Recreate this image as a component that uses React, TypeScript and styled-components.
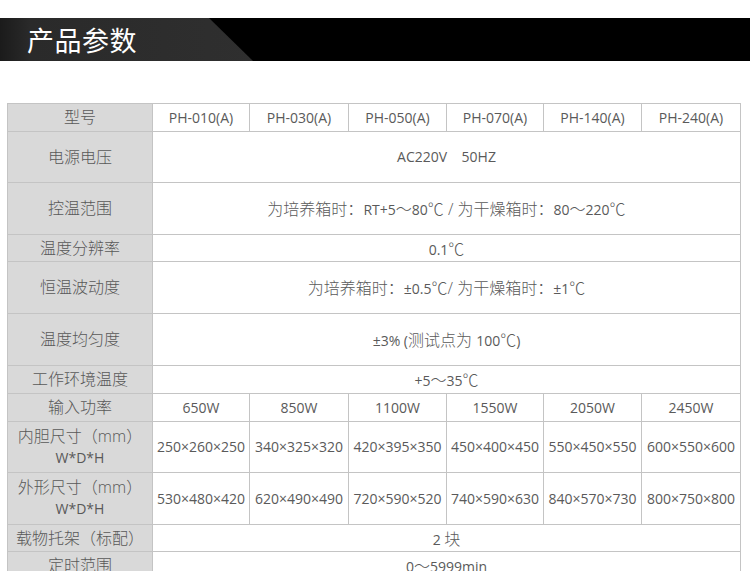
import React from "react";
import styled, { createGlobalStyle } from "styled-components";

const Global = createGlobalStyle`
  html, body { margin: 0; padding: 0; background: #fff; }
  body { font-family: "Open Sans", "Noto Sans CJK SC", sans-serif; }
`;

const Page = styled.div`
  width: 750px;
  padding-top: 18px;
`;

const TitleBar = styled.div`
  height: 43px;
  background: #000;
  display: flex;
`;

const TitlePanel = styled.div`
  width: 253px;
  height: 100%;
  background: linear-gradient(90deg, #1b1b1b 0%, #2a2a2a 12%, #2f2f2f 100%);
  clip-path: polygon(0 0, 209px 0, 253px 100%, 0 100%);
  display: flex;
  align-items: center;
  padding-left: 27px;
  box-sizing: border-box;
`;

const Title = styled.h1`
  margin: 0;
  color: #fff;
  font-family: "Noto Sans CJK SC", sans-serif;
  font-weight: 400;
  font-size: 27px;
  letter-spacing: 0.5px;
  line-height: 1;
`;

const Table = styled.table`
  margin: 42px 0 0 7px;
  width: 733px;
  border-collapse: collapse;
  table-layout: fixed;
`;

const Row = styled.tr<{ $h: number }>`
  height: ${(p) => p.$h}px;
`;

const Label = styled.td`
  background: #d9d9d9;
  border: 1px solid #c4c4c4;
  color: #585858;
  font-family: "Open Sans", "Noto Sans CJK SC", sans-serif;
  font-weight: 300;
  font-size: 16px;
  text-align: center;
  padding: 0 0 1px;
  line-height: 22px;
`;

const Sub = styled.span`
  display: block;
  font-size: 14px;
  font-weight: 400;
`;

const Cell = styled.td`
  background: #fff;
  border: 1px solid #c4c4c4;
  color: #5a5a5a;
  font-family: "Open Sans", "Noto Sans CJK SC", sans-serif;
  font-size: 14px;
  text-align: center;
  padding: 0 0 1px;
  white-space: pre;
`;

const Cjk = styled.span`
  font-size: 16px;
  font-weight: 300;
`;

const widths = [145, 97, 99, 98, 97, 98, 99];

type R = { label: React.ReactNode; h: number; values?: string[]; span?: React.ReactNode };

const rows: R[] = [
  { label: "型号", h: 28, values: ["PH-010(A)", "PH-030(A)", "PH-050(A)", "PH-070(A)", "PH-140(A)", "PH-240(A)"] },
  { label: "电源电压", h: 51, span: "AC220V    50HZ" },
  {
    label: "控温范围",
    h: 52,
    span: (
      <>
        <Cjk>为培养箱时：</Cjk>RT+5<Cjk>～</Cjk>80<Cjk>℃ / 为干燥箱时：</Cjk>80<Cjk>～</Cjk>220<Cjk>℃</Cjk>
      </>
    ),
  },
  { label: "温度分辨率", h: 27, span: <>0.1<Cjk>℃</Cjk></> },
  {
    label: "恒温波动度",
    h: 52,
    span: (
      <>
        <Cjk>为培养箱时：</Cjk>±0.5<Cjk>℃/ 为干燥箱时：</Cjk>±1<Cjk>℃</Cjk>
      </>
    ),
  },
  { label: "温度均匀度", h: 52, span: <>±3% (<Cjk>测试点为 </Cjk>100<Cjk>℃</Cjk>)</> },
  { label: "工作环境温度", h: 28, span: <>+5<Cjk>～</Cjk>35<Cjk>℃</Cjk></> },
  { label: "输入功率", h: 28, values: ["650W", "850W", "1100W", "1550W", "2050W", "2450W"] },
  {
    label: <>内胆尺寸（mm）<Sub>W*D*H</Sub></>,
    h: 51,
    values: ["250×260×250", "340×325×320", "420×395×350", "450×400×450", "550×450×550", "600×550×600"],
  },
  {
    label: <>外形尺寸（mm）<Sub>W*D*H</Sub></>,
    h: 52,
    values: ["530×480×420", "620×490×490", "720×590×520", "740×590×630", "840×570×730", "800×750×800"],
  },
  { label: "载物托架（标配）", h: 27, span: <>2 <Cjk>块</Cjk></> },
  { label: "定时范围", h: 28, span: <>0<Cjk>～</Cjk>5999min</> },
];

export default function App() {
  return (
    <Page>
      <Global />
      <TitleBar>
        <TitlePanel>
          <Title>产品参数</Title>
        </TitlePanel>
      </TitleBar>
      <Table>
        <colgroup>
          {widths.map((w, i) => (
            <col key={i} style={{ width: w }} />
          ))}
        </colgroup>
        <tbody>
          {rows.map((r, i) => (
            <Row key={i} $h={r.h}>
              <Label>{r.label}</Label>
              {r.values ? r.values.map((v, j) => <Cell key={j}>{v}</Cell>) : <Cell colSpan={6}>{r.span}</Cell>}
            </Row>
          ))}
        </tbody>
      </Table>
    </Page>
  );
}
